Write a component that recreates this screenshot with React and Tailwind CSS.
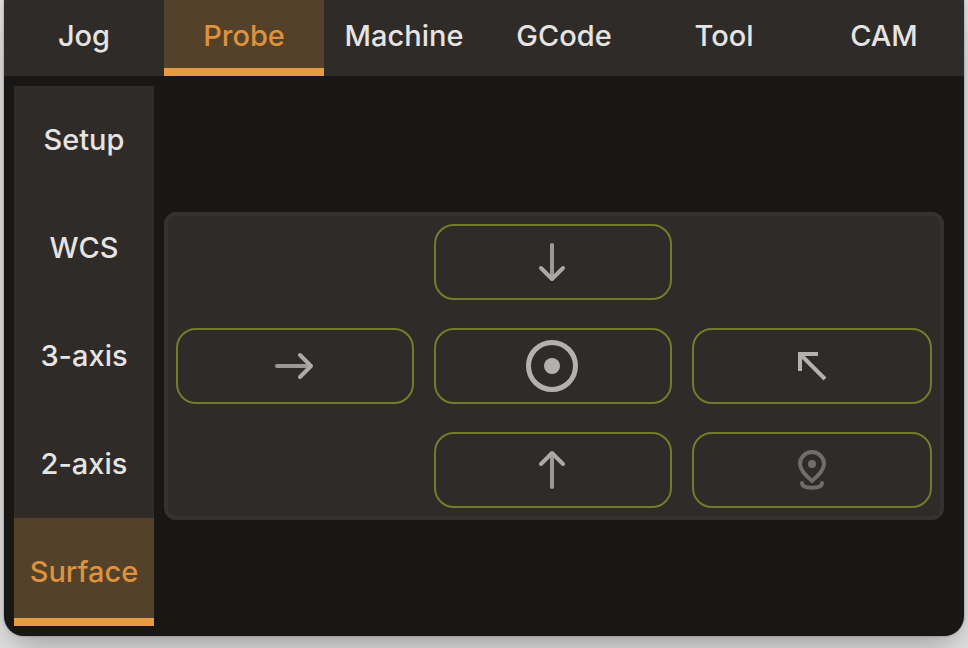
const tabs = ["Jog", "Probe", "Machine", "GCode", "Tool", "CAM"];
const sections = ["Setup", "WCS", "3-axis", "2-axis", "Surface"];

const active =
  "text-[#dd923d] before:absolute before:inset-x-0 before:bottom-0 before:h-2 before:bg-[#e69b40] bg-[#544129]";
const idle = "text-[#e6e4e3]";

function ArrowIcon({ turn }) {
  return (
    <svg viewBox="0 0 40 40" className="size-10" fill="none" strokeWidth="4" strokeLinecap="round" strokeLinejoin="round" aria-hidden="true">
      <g transform={`rotate(${turn} 20 20)`}>
        <path d="M3 20H35" stroke="#9b9998" />
        <path d="M26 9l11 11-11 11" stroke="#acaaa9" />
      </g>
    </svg>
  );
}

function DiagonalIcon() {
  return (
    <svg viewBox="0 0 40 40" className="size-10" fill="none" stroke="currentColor" strokeWidth="4" aria-hidden="true">
      <path d="M9 25V8h18M9 8l25 25" />
    </svg>
  );
}

function CenterIcon() {
  return (
    <svg viewBox="0 0 52 52" className="size-13" aria-hidden="true">
      <circle cx="26" cy="26" r="23.5" fill="none" stroke="currentColor" strokeWidth="5" />
      <circle cx="26" cy="26" r="8" fill="currentColor" />
    </svg>
  );
}

function PinIcon() {
  return (
    <svg viewBox="0 0 40 40" className="size-10" fill="none" stroke="currentColor" strokeWidth="4" strokeLinecap="round" strokeLinejoin="round" aria-hidden="true">
      <path d="M21 31C14.500 25.500 9 20 9 14a12 12 0 0 1 24 0C33 20 27.500 25.500 21 31Z" />
      <circle cx="21" cy="14" r="4" fill="currentColor" stroke="none" />
      <path d="M11 33C11 36.500 14 37.800 21 37.800S31 36.500 31 33" />
    </svg>
  );
}

function ProbeButton({ label, className = "", children, disabled }) {
  return (
    <button
      type="button"
      aria-label={label}
      disabled={disabled}
      className={`flex h-19 items-center justify-center rounded-[20px] border-2 border-[#747b2a] pr-0.5 text-[#b3b1b0] disabled:text-[#6f6c6a] ${className}`}
    >
      {children}
    </button>
  );
}

export default function App() {
  return (
    <div className="min-h-screen overflow-hidden bg-[#dedede] px-1 pb-3 font-['Inter','Liberation_Sans',sans-serif] text-[29px] leading-9 font-medium">
      <div className="overflow-hidden rounded-b-[20px] bg-[#191715] shadow-[0_0_2px_rgba(0,0,0,0.4),0_0_16px_rgba(0,0,0,0.1),0_24px_32px_-12px_rgba(0,0,0,0.22)]">
        <nav className="grid h-19 grid-cols-6 bg-[#2f2b28]" aria-label="Main">
          {tabs.map((tab) => (
            <button key={tab} type="button" className={`relative pb-1 ${tab === "Probe" ? active : idle}`}>
              {tab}
            </button>
          ))}
        </nav>
        <div className="flex gap-2.5 p-2.5">
          <nav className="flex w-35 shrink-0 flex-col bg-[#2f2b28]" aria-label="Probe">
            {sections.map((name) => (
              <button key={name} type="button" className={`relative h-27 ${name === "Surface" ? active : idle}`}>
                {name}
              </button>
            ))}
          </nav>
          <main className="flex flex-1 items-center pt-5 pr-2.5">
            <div className="grid flex-1 grid-cols-[119fr_119fr_120fr] gap-x-5 gap-y-7 rounded-xl border-4 border-[#35312e] bg-[#2f2b28] p-2">
              <ProbeButton label="Probe down" className="col-start-2">
                <ArrowIcon turn={90} />
              </ProbeButton>
              <ProbeButton label="Probe right" className="col-start-1">
                <ArrowIcon turn={0} />
              </ProbeButton>
              <ProbeButton label="Probe center">
                <CenterIcon />
              </ProbeButton>
              <ProbeButton label="Probe up left">
                <DiagonalIcon />
              </ProbeButton>
              <ProbeButton label="Probe up" className="col-start-2">
                <ArrowIcon turn={-90} />
              </ProbeButton>
              <ProbeButton label="Probe location" disabled>
                <PinIcon />
              </ProbeButton>
            </div>
          </main>
        </div>
      </div>
    </div>
  );
}
